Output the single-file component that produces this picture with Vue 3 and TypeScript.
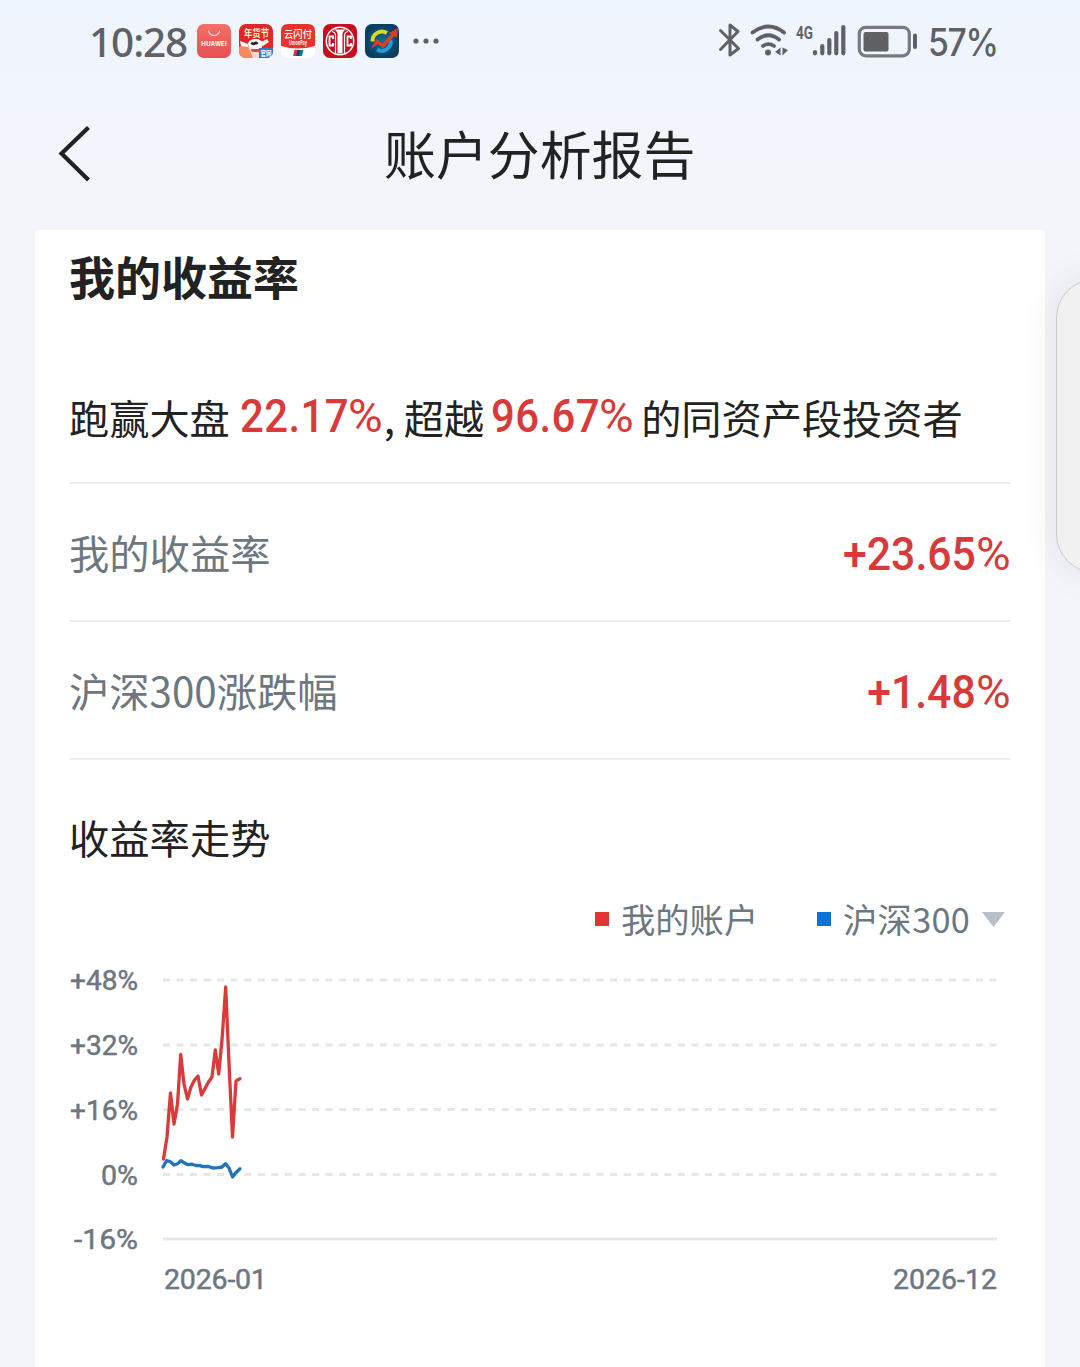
<script setup lang="ts">
interface Metric {
  label: string
  digits: string
}

const metrics: Metric[] = [
  { label: '我的收益率', digits: '+23.65' },
  { label: '沪深300涨跌幅', digits: '+1.48' },
]

interface Tick {
  y: number
  text: string
  x: number
  solid?: boolean
}

const ticks: Tick[] = [
  { y: 20, text: '+48%', x: 1 },
  { y: 85, text: '+32%', x: 1 },
  { y: 149.5, text: '+16%', x: 1 },
  { y: 214.5, text: '0%', x: 32 },
  { y: 279, text: '-16%', x: 5, solid: true },
]

const account: [number, number][] = [
  [94.5, 199], [98, 177], [101.5, 133], [105, 164], [108.5, 144], [111.7, 94.5], [115, 124],
  [118.5, 139], [122, 127], [125.5, 120], [129, 116], [132.5, 135], [136, 128.5], [139.5, 122],
  [143, 117], [146.3, 90], [149.7, 114], [153, 80], [156.7, 27], [160, 103], [163.5, 177],
  [167, 121], [168.5, 120], [171, 118.7],
]

const index: [number, number][] = [
  [94, 207], [97.5, 200.7], [101, 201.5], [105, 205], [108.5, 203.7], [112, 200.7], [116, 203.3],
  [119, 204.7], [123, 204.2], [127, 205.5], [131, 205.6], [134, 206.6], [139, 206.4], [144, 208],
  [149, 207.6], [153, 207], [156.5, 203.7], [160, 208], [163.5, 217], [167, 212.5], [171, 208.7],
]

const toPoints = (list: [number, number][]): string => list.map((p) => p.join(',')).join(' ')
</script>

<template>
  <div class="screen">
    <header class="status">
      <span class="clock">10:28</span>
      <div class="apps">
        <svg viewBox="0 0 34 34">
          <defs>
            <linearGradient id="hw" x1="0" y1="0" x2="0" y2="1">
              <stop offset="0" stop-color="#f47068" />
              <stop offset="1" stop-color="#e84d55" />
            </linearGradient>
          </defs>
          <rect width="34" height="34" rx="7" fill="url(#hw)" />
          <path d="M11.500 6.500a5.500 5 0 0 0 11 0" fill="none" stroke="#ffd3cb" stroke-width="1.200" />
          <text x="4" y="22" textLength="26" lengthAdjust="spacingAndGlyphs" font-size="6" font-weight="700" fill="#fff">HUAWEI</text>
        </svg>
        <svg viewBox="0 0 34 34">
          <rect width="34" height="34" rx="7" fill="#df2629" />
          <path d="M0 23q5-4 10 0l10 11H7q-7 0-7-7z" fill="#f48a62" />
          <path d="M1 17l8 3v3l-7-1z" fill="#fff" />
          <path d="M22 18l6-3 2 3-6 4z" fill="#ffe9df" />
          <path d="M9 22l5 12h8l1-12z" fill="#fbd9c9" />
          <ellipse cx="16.500" cy="20" rx="7.500" ry="5" fill="#fff" />
          <path d="M11.500 20q1-3 3-1.500 2-2 5 .5-1 2-3 1.500-2 1.500-5-.5z" fill="#3b1c1f" />
          <path d="M12 25h9l-1 3h-7z" fill="#e8434a" />
          <text x="5" y="12.500" font-size="10" font-weight="700" textLength="25" lengthAdjust="spacingAndGlyphs" fill="#ffe9bf">年货节</text>
          <path d="M20 24h14v3q0 7-7 7h-7z" fill="#3a78cf" />
          <text x="21.500" y="31.500" font-size="7" font-weight="700" textLength="11" lengthAdjust="spacingAndGlyphs" fill="#fff">官网</text>
        </svg>
        <svg viewBox="0 0 34 34">
          <rect width="34" height="34" rx="7" fill="#fff" />
          <path d="M0 22V7q0-7 7-7h20q7 0 7 7v15q-17 5-34 0z" fill="#e8322d" />
          <text x="3" y="13.500" font-size="10" font-weight="500" textLength="28" lengthAdjust="spacingAndGlyphs" fill="#fff">云闪付</text>
          <text x="8" y="20.500" font-size="5.500" font-weight="700" textLength="18" lengthAdjust="spacingAndGlyphs" fill="#fff">UnionPay</text>
          <path d="M13.500 26h3.500l-1.500 6h-3.500z" fill="#d8343b" />
          <path d="M16.500 26h3.500l-1.500 6H15z" fill="#1c3f72" />
          <path d="M19.500 26h3l-1.500 6h-3z" fill="#0c7f83" />
        </svg>
        <svg viewBox="0 0 34 34">
          <rect width="34" height="34" rx="7" fill="#c60f1e" />
          <circle cx="17" cy="17" r="13.700" fill="none" stroke="#fff" stroke-width="1.500" />
          <g fill="none" stroke="#fff">
            <path d="M10 15v-2.500H6.500v9H10V19M28 15v-2.500h-3.500v9H28V19" stroke-width="1.800" />
            <path d="M9 7.500q3.500.5 3.500 4.500v17M25 7.500q-3.500.5-3.500 4.500v17" stroke-width="1.200" />
          </g>
          <path d="M11 5.500h12q-3.500 1.500-3.500 5v19h-5v-19q0-3.500-3.500-5z" fill="#fff" />
        </svg>
        <svg viewBox="0 0 34 34">
          <defs>
            <radialGradient id="bl"><stop offset="0" stop-color="#116c92" /><stop offset="1" stop-color="#093e62" /></radialGradient>
          </defs>
          <rect width="34" height="34" rx="7" fill="url(#bl)" />
          <path d="M7.500 17.500A9.500 9.500 0 0 1 22 9" fill="none" stroke="#d8d52b" stroke-width="4" />
          <path d="M25.500 16A9 9 0 0 1 12 25.500" fill="none" stroke="#259bd8" stroke-width="4" />
          <path d="M5.500 25L11.500 15l6 4.500L26 10l-2.500-.5L33 4l-1 9.500-2.500-1.500L18 24.500 13 20z" fill="#d93e2b" />
        </svg>
      </div>
      <svg class="dots" viewBox="0 0 26 6" fill="#5f6266">
        <circle cx="3" cy="3" r="2.600" /><circle cx="13" cy="3" r="2.600" /><circle cx="23" cy="3" r="2.600" />
      </svg>
      <svg class="signals" viewBox="716 20 204 42" fill="none" stroke="#5f6165">
        <path d="M720.500 30.500l18 18-8.500 6.500V25l8 6.500-17.500 18" stroke-width="3" stroke-linecap="round" stroke-linejoin="round" />
        <g stroke-width="3.800" stroke-linecap="round">
          <path d="M752.500 32.500Q768.500 20.500 784 32.500" />
          <path d="M757.500 39.500Q768.500 31 779 39.500" />
          <path d="M763 46Q768.500 42.300 774 46" />
        </g>
        <g fill="#5f6165" stroke="none">
          <circle cx="768" cy="52.500" r="3" />
          <path d="M780.500 47.500v8l-5.500-3.500zM782.500 47.500v8l5.500-5.500z" />
          <text x="796" y="38.500" font-size="18" font-weight="700" textLength="17" lengthAdjust="spacingAndGlyphs">4G</text>
        </g>
        <g stroke-width="4.200" stroke-linecap="round">
          <path d="M815 52v1.300M822.300 46v7.300M829.300 40v13.300M836.300 33v20.300M843.300 27v26.300" />
        </g>
        <rect x="859.300" y="27.300" width="50" height="28.500" rx="6.500" stroke="#77797d" stroke-width="3.200" />
        <rect x="863.500" y="32" width="25" height="19.500" rx="2" fill="#5f6165" stroke="none" />
        <path d="M915 35.500v11.500" stroke-width="4" stroke-linecap="round" />
      </svg>
      <span class="power">57%</span>
    </header>

    <nav class="bar">
      <svg class="back" viewBox="0 0 34 56"><path d="M31.500 1.500L4.500 27.500l27 26.500" fill="none" stroke="#222" stroke-width="4.200" /></svg>
      <h1>账户分析报告</h1>
    </nav>

    <main class="card">
      <h2>我的收益率</h2>
      <p class="summary">
        <span>跑赢大盘</span><b class="first"><em>22.17</em><i>%</i></b><span class="comma">,</span><span>超越</span><b class="second"><em>96.67</em><i>%</i></b><span class="rest">的同资产段投资者</span>
      </p>
      <div v-for="m in metrics" :key="m.label" class="metric">
        <span>{{ m.label }}</span>
        <b><em>{{ m.digits }}</em><i>%</i></b>
      </div>
      <h3>收益率走势</h3>
      <div class="legend">
        <i class="red"></i><span class="mine">我的账户</span>
        <i class="blue"></i><span class="hs">沪深300</span>
        <svg viewBox="0 0 23 15"><path d="M0 0h23L11.500 15z" fill="#b9bfc8" /></svg>
      </div>
      <svg class="chart" viewBox="0 0 942 340">
        <g v-for="t in ticks" :key="t.text">
          <line
            x1="94" x2="928" :y1="t.y" :y2="t.y" stroke="#e7e7e8" stroke-width="3"
            :stroke-dasharray="t.solid ? undefined : '7 6.550'"
          />
          <text :x="t.x" :y="t.y + 10" :textLength="69 - t.x" lengthAdjust="spacingAndGlyphs">{{ t.text }}</text>
        </g>
        <polyline :points="toPoints(account)" stroke="#d93a3a" />
        <polyline :points="toPoints(index)" stroke="#1f75bd" />
        <text x="95" y="329" textLength="103" lengthAdjust="spacing">2026-01</text>
        <text x="824" y="329" textLength="104" lengthAdjust="spacing">2026-12</text>
      </svg>
    </main>
    <aside class="drawer"></aside>
  </div>
</template>

<style>
body {
  margin: 0;
}
</style>

<style scoped>
.screen {
  position: relative;
  width: 1080px;
  height: 1367px;
  overflow: hidden;
  background: linear-gradient(180deg, #eff5fe 0, #f1f5fc 100px, #f4f5fa 220px, #f4f5fa 100%);
  color: #222;
  font-family: "Noto Sans CJK SC", sans-serif;
}
h1, h2, h3, p {
  margin: 0;
  font-weight: 400;
}
svg {
  display: block;
  flex: none;
}
.status {
  display: flex;
  align-items: center;
  height: 82px;
  padding-left: 89px;
  color: #5f6165;
  font-family: "Noto Sans", "Noto Sans CJK SC", sans-serif;
}
.clock {
  width: 108px;
  font-size: 40.500px;
  font-weight: 500;
  letter-spacing: -1.100px;
  line-height: 60px;
  margin-top: 2px;
  white-space: nowrap;
}
.apps {
  display: flex;
  gap: 8px;
}
.apps svg {
  width: 34px;
  height: 34px;
  font-family: "Noto Sans CJK SC", sans-serif;
}
.dots {
  width: 26px;
  height: 6px;
  margin-left: 14px;
}
.signals {
  width: 204px;
  height: 42px;
  margin-left: 277px;
  font-family: Roboto, sans-serif;
}
.power {
  margin: 3px 0 0 8px;
  font-family: Inter, sans-serif;
  font-size: 37.500px;
  font-weight: 450;
  line-height: 60px;
  letter-spacing: -1.500px;
  transform: scaleX(0.9);
  transform-origin: 0 50%;
}
.bar {
  display: flex;
  align-items: center;
  height: 148px;
  padding-left: 57px;
}
.back {
  width: 34px;
  height: 56px;
  margin-top: -5px;
}
h1 {
  margin: -7px 0 0 293px;
  font-size: 51.900px;
  line-height: 76px;
}
.card {
  box-sizing: border-box;
  width: 1010px;
  height: 1137px;
  margin-left: 35px;
  padding: 0 34px;
  border-radius: 3px 3px 0 0;
  background: #fff;
}
h2 {
  padding-top: 11px;
  font-size: 46px;
  font-weight: 700;
  line-height: 68px;
}
.summary {
  display: flex;
  align-items: flex-end;
  box-sizing: border-box;
  height: 175px;
  padding-bottom: 35px;
  border-bottom: 2px solid #ededee;
  font-size: 40.200px;
  line-height: 60px;
  white-space: nowrap;
}
b {
  display: flex;
  color: #d83a3a;
  font-family: Roboto, sans-serif;
  font-size: 46px;
  font-weight: 500;
}
b em {
  display: block;
  font-style: normal;
  transform: scaleX(0.93);
  transform-origin: 100% 50%;
}
b i {
  width: 35px;
  font-style: normal;
  font-weight: 400;
  transform: scaleX(1.03);
  transform-origin: 0 50%;
}
.summary b {
  margin-bottom: 1px;
}
.summary b em {
  width: 108px;
  letter-spacing: 0.500px;
  transform: scaleX(0.91);
  transform-origin: 0 50%;
}
.first {
  width: 144px;
  margin-left: 10px;
}
.comma {
  width: 20px;
}
.second {
  width: 146px;
  margin-left: 7px;
}
.rest {
  margin-left: 4px;
}
.metric {
  display: flex;
  justify-content: space-between;
  align-items: center;
  box-sizing: border-box;
  height: 138px;
  border-bottom: 2px solid #ededee;
  color: #6d7780;
  font-size: 40.300px;
  line-height: 60px;
}
.metric b {
  margin-top: 4px;
}
h3 {
  padding-top: 47px;
  font-size: 40.300px;
  line-height: 60px;
}
.legend {
  display: flex;
  align-items: center;
  height: 60px;
  margin-top: 22px;
  padding-left: 526px;
  color: #6d7780;
  font-size: 34.300px;
  line-height: 50px;
}
.legend i {
  width: 14px;
  height: 14px;
  margin-right: 12px;
}
.red {
  background: #e33434;
}
.blue {
  background: #0b74da;
}
.mine {
  width: 196px;
}
.legend span {
  margin-top: -3px;
}
.hs {
  letter-spacing: 0.300px;
}
.legend svg {
  width: 23px;
  height: 15px;
  margin-left: 12px;
}
.chart {
  width: 942px;
  height: 340px;
  margin-top: 11px;
}
.chart text {
  fill: #6d7780;
  stroke: #6d7780;
  stroke-width: 0.500px;
  font: 400 28.500px Roboto, sans-serif;
}
.chart polyline {
  fill: none;
  stroke-width: 3.300;
  stroke-linejoin: round;
  stroke-linecap: round;
}
.drawer {
  position: absolute;
  left: 1056px;
  top: 279px;
  width: 80px;
  height: 294px;
  box-sizing: border-box;
  border: 1.500px solid #ccc;
  border-radius: 39px;
  background: #f1f1f1;
  box-shadow: 0 0 36px rgba(60, 60, 90, 0.1);
}
</style>
